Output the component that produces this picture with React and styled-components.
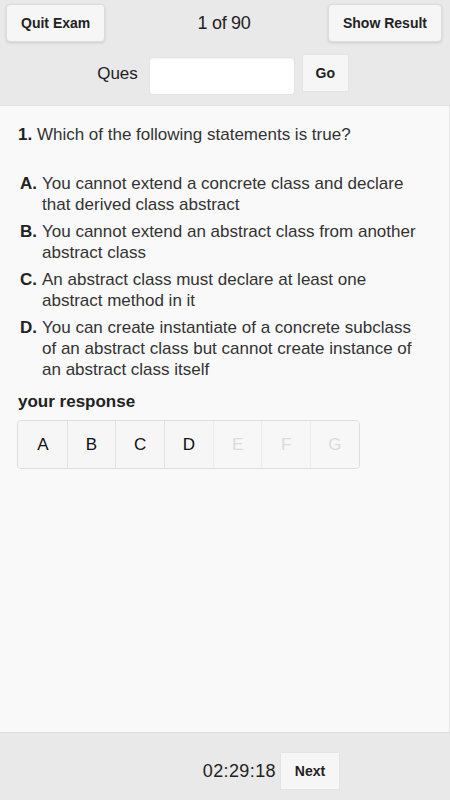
import React, { useState } from 'react';
import styled, { createGlobalStyle } from 'styled-components';

const GlobalStyle = createGlobalStyle`
  html, body {
    margin: 0;
    padding: 0;
    background: #f9f9f9;
  }
  body {
    font-family: "Liberation Sans", Arial, Helvetica, sans-serif;
    color: #333;
  }
  * { box-sizing: border-box; }
`;

// layout
const Page = styled.div`
  display: flex;
  flex-direction: column;
  width: 450px;
  height: 800px;
`;

const Header = styled.header`
  background: #e9e9e9;
  padding: 4px 8px 10px 6px;
  border-bottom: 1px solid #e2e2e2;
`;

const TopRow = styled.div`
  display: grid;
  grid-template-columns: 1fr auto 1fr;
  align-items: center;
`;

const Title = styled.div`
  font-size: 18px;
  color: #222;
  letter-spacing: -0.3px;
`;

const HeadButton = styled.button`
  justify-self: ${(p) => (p.$end ? 'end' : 'start')};
  height: 38px;
  padding: 0 14px;
  font-family: inherit;
  font-size: 14px;
  font-weight: bold;
  color: #222;
  background: #f6f6f6;
  border: 1px solid #dcdcdc;
  border-radius: 4px;
  box-shadow: 0 1px 3px rgba(0, 0, 0, 0.12);
`;

const SearchRow = styled.div`
  display: flex;
  justify-content: center;
  align-items: flex-start;
  margin-top: 12px;
  padding-right: 2px;
`;

const Label = styled.label`
  font-size: 17px;
  color: #222;
  margin-top: 10px;
  margin-right: 11px;
`;

const QuesInput = styled.input`
  width: 146px;
  height: 38px;
  margin-top: 3px;
  border: 1px solid #e4e4e4;
  border-radius: 4px;
  background: #fff;
  box-shadow: inset 0 1px 2px rgba(0, 0, 0, 0.05);
  outline: none;
`;

const SquareButton = styled.button`
  width: ${(p) => p.$w || 47}px;
  height: 38px;
  margin-left: ${(p) => p.$ml || 0}px;
  font-family: inherit;
  font-size: 14px;
  font-weight: bold;
  color: #222;
  background: #f6f6f6;
  border: 1px solid #e4e4e4;
  border-radius: 0;
`;

const Content = styled.main`
  flex: 1;
  padding: 18px 30px 0 18px;
  background: #f9f9f9;
  border-right: 1px solid #e6e6e6;
`;

const Question = styled.p`
  margin: 0 0 28px 0;
  font-size: 17px;
  line-height: 21px;
  color: #333;
  b { color: #222; }
`;

const OptionList = styled.div`
  display: flex;
  flex-direction: column;
  gap: 6px;
  padding-left: 2px;
`;

const Option = styled.div`
  display: flex;
  font-size: 17px;
  line-height: 21px;
  color: #333;
`;

const Letter = styled.span`
  flex: 0 0 22px;
  font-weight: bold;
  color: #222;
`;

const ResponseLabel = styled.div`
  margin-top: 11px;
  font-size: 17px;
  font-weight: bold;
  line-height: 21px;
  color: #222;
`;

const Group = styled.div`
  display: inline-flex;
  margin-top: 8px;
  margin-left: -1px;
  border-radius: 4px;
  border: 1px solid #dedede;
  overflow: hidden;
`;

const Choice = styled.button`
  width: 48.7px;
  height: 47px;
  font-family: inherit;
  font-size: 17px;
  color: ${(p) => (p.disabled ? '#c4c4c4' : '#111')};
  background: #f6f6f6;
  border: none;
  border-left: 1px solid ${(p) => (p.$first ? 'transparent' : '#e2e2e2')};
  opacity: ${(p) => (p.disabled ? 0.55 : 1)};
`;

const Footer = styled.footer`
  display: flex;
  justify-content: flex-end;
  align-items: flex-start;
  height: 68px;
  padding: 19px 110px 0 0;
  background: #e9e9e9;
  border-top: 1px solid #dedede;
`;

const Timer = styled.span`
  font-size: 18px;
  line-height: 38px;
  color: #222;
  letter-spacing: 0.4px;
  margin-right: 4px;
`;

const options = [
  { key: 'A', text: 'You cannot extend a concrete class and declare that derived class abstract' },
  { key: 'B', text: 'You cannot extend an abstract class from another abstract class' },
  { key: 'C', text: 'An abstract class must declare at least one abstract method in it' },
  { key: 'D', text: 'You can create instantiate of a concrete subclass of an abstract class but cannot create instance of an abstract class itself' },
];

const letters = ['A', 'B', 'C', 'D', 'E', 'F', 'G'];

export default function App() {
  const [ques, setQues] = useState('');

  return (
    <Page>
      <GlobalStyle />
      <Header>
        <TopRow>
          <HeadButton>Quit Exam</HeadButton>
          <Title>1 of 90</Title>
          <HeadButton $end>Show Result</HeadButton>
        </TopRow>
        <SearchRow>
          <Label htmlFor="ques">Ques</Label>
          <QuesInput id="ques" value={ques} onChange={(e) => setQues(e.target.value)} />
          <SquareButton $ml={7}>Go</SquareButton>
        </SearchRow>
      </Header>

      <Content>
        <Question>
          <b>1.</b> Which of the following statements is true?
        </Question>
        <OptionList>
          {options.map((o) => (
            <Option key={o.key}>
              <Letter>{o.key}.</Letter>
              <span>{o.text}</span>
            </Option>
          ))}
        </OptionList>
        <ResponseLabel>your response</ResponseLabel>
        <Group>
          {letters.map((l, i) => (
            <Choice key={l} $first={i === 0} disabled={i >= options.length}>
              {l}
            </Choice>
          ))}
        </Group>
      </Content>

      <Footer>
        <Timer>02:29:18</Timer>
        <SquareButton $w={60}>Next</SquareButton>
      </Footer>
    </Page>
  );
}
